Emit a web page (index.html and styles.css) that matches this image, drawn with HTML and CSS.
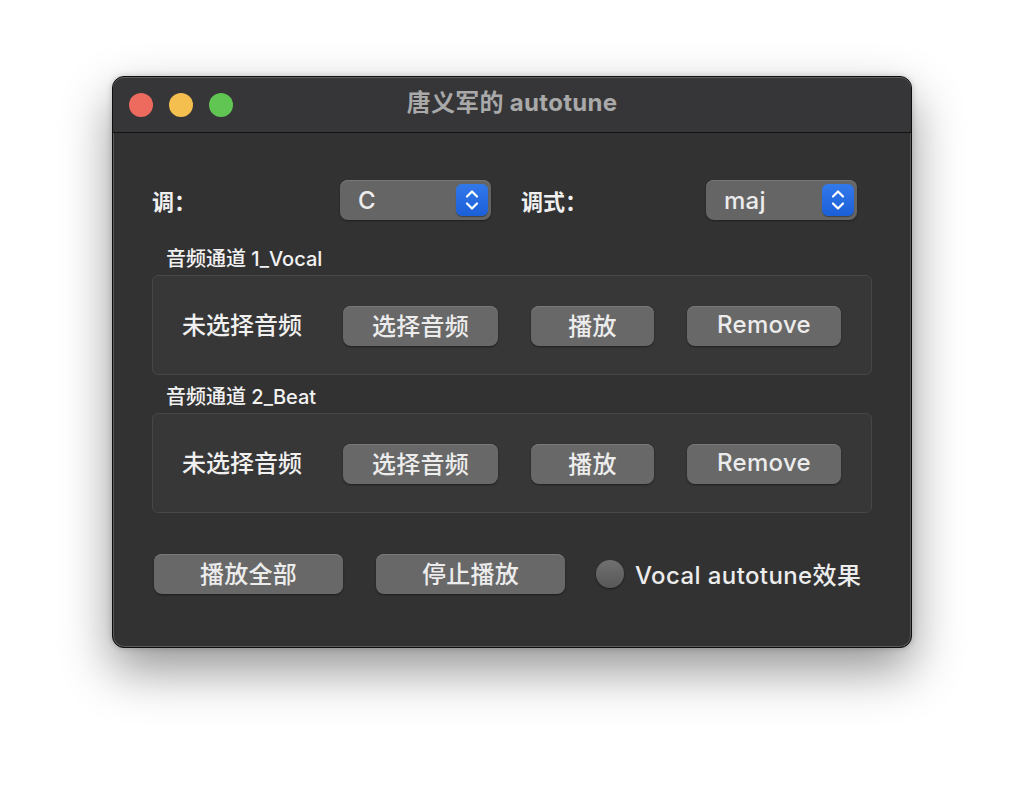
FILE: index.html
```html
<!DOCTYPE html>
<html lang="zh">
<head>
<meta charset="utf-8">
<title>唐义军的autotune</title>
<link rel="stylesheet" href="styles.css">
</head>
<body>
<div class="window">
  <div class="titlebar">
    <div class="lights">
      <span class="light red"></span>
      <span class="light yellow"></span>
      <span class="light green"></span>
    </div>
    <div class="title">唐义军的 autotune</div>
  </div>
  <div class="content">
    <div class="keyrow">
      <div class="label key-label">调：</div>
      <div class="popup">
        <span class="popup-text">C</span>
        <span class="stepper"><svg width="32" height="32" viewBox="0 0 32 32"><path d="M11 12.5 L16 7.5 L21 12.5" fill="none" stroke="#fff" stroke-width="2.2" stroke-linecap="round" stroke-linejoin="round"/><path d="M11 19.5 L16 24.5 L21 19.5" fill="none" stroke="#fff" stroke-width="2.2" stroke-linecap="round" stroke-linejoin="round"/></svg></span>
      </div>
      <div class="label mode-label">调式：</div>
      <div class="popup">
        <span class="popup-text">maj</span>
        <span class="stepper"><svg width="32" height="32" viewBox="0 0 32 32"><path d="M11 12.5 L16 7.5 L21 12.5" fill="none" stroke="#fff" stroke-width="2.2" stroke-linecap="round" stroke-linejoin="round"/><path d="M11 19.5 L16 24.5 L21 19.5" fill="none" stroke="#fff" stroke-width="2.2" stroke-linecap="round" stroke-linejoin="round"/></svg></span>
      </div>
    </div>

    <div class="group-title first">音频通道 1_Vocal</div>
    <div class="group">
      <div class="track">
        <div class="track-label">未选择音频</div>
        <div class="btn w-select">选择音频</div>
        <div class="btn w-play">播放</div>
        <div class="btn w-remove">Remove</div>
      </div>
    </div>

    <div class="group-title">音频通道 2_Beat</div>
    <div class="group">
      <div class="track">
        <div class="track-label">未选择音频</div>
        <div class="btn w-select">选择音频</div>
        <div class="btn w-play">播放</div>
        <div class="btn w-remove">Remove</div>
      </div>
    </div>

    <div class="bottom">
      <div class="btn w-big">播放全部</div>
      <div class="btn w-big">停止播放</div>
      <div class="radio-wrap">
        <span class="radio"></span>
        <span class="radio-label">Vocal autotune效果</span>
      </div>
    </div>
  </div>
</div>
</body>
</html>
```
FILE: styles.css
```css
* { box-sizing: border-box; }
html, body { margin: 0; padding: 0; }
body {
  background: #ffffff;
  width: 1024px;
  height: 796px;
  padding-top: 76px;
  font-family: Inter, "Noto Sans CJK SC", sans-serif;
  font-weight: 500;
  color: #e6e6e6;
}
.window {
  width: 800px;
  height: 572px;
  margin: 0 auto;
  background: #323232;
  border-radius: 12px;
  border: 1px solid #0e0e0e;
  box-shadow: inset 0 0 0 1px #5a5a5a, 0 22px 50px rgba(0,0,0,0.42), 0 0 6px rgba(0,0,0,0.2);
  overflow: hidden;
}
.titlebar {
  height: 56px;
  display: flex;
  align-items: center;
  position: relative;
  background: #363638;
  border-bottom: 1px solid #141414;
  border-radius: 11px 11px 0 0;
  box-shadow: inset 0 1px 0 #5e5e5e;
}
.lights {
  display: flex;
  gap: 16px;
  padding-left: 16px;
}
.light {
  width: 24px;
  height: 24px;
  border-radius: 50%;
  display: block;
}
.red { background: #ec6a5e; }
.yellow { background: #f4bf4f; }
.green { background: #61c554; }
.title {
  position: absolute;
  left: 0;
  right: 0;
  top: 12px;
  text-align: center;
  font-size: 24px;
  font-weight: 700;
  color: #a9a9a9;
  line-height: 28px;
  letter-spacing: 0.3px;
  pointer-events: none;
}
.content {
  padding: 47px 40px 0 39px;
}
.keyrow {
  display: flex;
  align-items: center;
  height: 40px;
}
.label {
  font-size: 22px;
  font-weight: 700;
  color: #f0f0f0;
  padding-bottom: 1px;
}
.key-label { width: 188px; }
.mode-label { width: 185px; margin-left: 30px; }
.popup {
  width: 151px;
  height: 40px;
  border-radius: 8px;
  background: #656565;
  box-shadow: inset 0 1px 0 #777, 0 1px 2px rgba(0,0,0,0.4);
  display: flex;
  align-items: center;
  justify-content: space-between;
  padding: 0 3px 0 18px;
}
.popup-text {
  font-size: 24px;
  color: #ececec;
  letter-spacing: 0.3px;
}
.stepper {
  width: 32px;
  height: 32px;
  border-radius: 6px;
  background: linear-gradient(#3279ea, #1b5fd8);
  box-shadow: 0 1px 1px rgba(0,0,0,0.35);
  display: flex;
}
.group-title {
  font-size: 20px;
  line-height: 24px;
  color: #f2f2f2;
  padding-left: 14px;
  margin-top: 10px;
  margin-bottom: 4px;
}
.group-title.first { margin-top: 27px; }
.group {
  width: 720px;
  height: 100px;
  border: 1px solid #474747;
  border-radius: 6px;
  background: #373737;
  padding: 30px 0 0 29px;
}
.track {
  display: flex;
  align-items: center;
  height: 40px;
}
.track-label {
  width: 161px;
  font-size: 24px;
  color: #f0f0f0;
  padding-bottom: 5px;
}
.btn {
  height: 40px;
  border-radius: 8px;
  background: #686868;
  box-shadow: inset 0 1px 0 #7a7a7a, 0 1px 2px rgba(0,0,0,0.45);
  display: flex;
  align-items: center;
  justify-content: center;
  font-size: 24px;
  color: #ececec;
  padding-bottom: 3px;
  letter-spacing: 0.3px;
}
.w-select { width: 155px; }
.w-play { width: 123px; margin-left: 33px; }
.w-remove { width: 154px; margin-left: 33px; }
.bottom {
  display: flex;
  align-items: center;
  margin-top: 41px;
  padding-left: 2px;
}
.w-big { width: 189px; }
.w-big + .w-big { margin-left: 33px; }
.radio-wrap {
  display: flex;
  align-items: center;
  margin-left: 31px;
}
.radio {
  width: 28px;
  height: 28px;
  border-radius: 50%;
  background: linear-gradient(#707070, #585858);
  box-shadow: 0 1px 2px rgba(0,0,0,0.5);
  display: block;
}
.radio-label {
  margin-left: 11px;
  font-size: 24px;
  color: #ececec;
  padding-bottom: 2px;
  letter-spacing: 0.4px;
}
```
